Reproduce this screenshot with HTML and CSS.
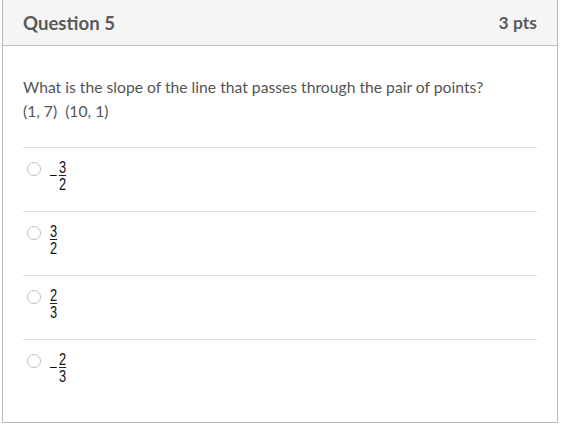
FILE: index.html
```html
<!DOCTYPE html>
<html>
<head>
<meta charset="utf-8">
<link rel="stylesheet" href="styles.css">
</head>
<body>
<div class="quiz">
  <div class="header">
    <span class="title">Question 5</span>
    <span class="pts">3 pts</span>
  </div>
  <div class="body">
    <div class="question">
      <div>What is the slope of the line that passes through the pair of points?</div>
      <div>(1, 7)&nbsp;&nbsp;(10, 1)</div>
    </div>
    <div class="answers">
      <div class="answer"><span class="radio"></span><span class="math"><span class="minus">−</span><span class="frac"><span class="num">3</span><span class="den">2</span></span></span></div>
      <div class="answer"><span class="radio"></span><span class="math"><span class="frac"><span class="num">3</span><span class="den">2</span></span></span></div>
      <div class="answer"><span class="radio"></span><span class="math"><span class="frac"><span class="num">2</span><span class="den">3</span></span></span></div>
      <div class="answer"><span class="radio"></span><span class="math"><span class="minus">−</span><span class="frac"><span class="num">2</span><span class="den">3</span></span></span></div>
    </div>
  </div>
</div>
</body>
</html>
```
FILE: styles.css
```css
html, body {
  margin: 0;
  padding: 0;
  background: #fff;
}
body {
  font-family: Lato, "Noto Sans", sans-serif;
  color: #555;
}
.quiz {
  margin: -1px 0 0 2px;
  width: 554px;
  height: 422px;
  border: 1px solid #b9b9b9;
  display: flex;
  flex-direction: column;
}
.header {
  height: 45px;
  background: #f5f5f5;
  border-bottom: 1px solid #c0c0c0;
  display: flex;
  justify-content: space-between;
  align-items: center;
  padding: 0 20px;
  font-weight: bold;
  font-size: 18.6px;
  color: #5a5a5a;
}
.pts {
  font-size: 17.5px;
}
.body {
  padding: 29px 20px 0 20px;
}
.question {
  font-size: 15.7px;
  line-height: 24px;
  color: #555;
  padding-bottom: 24px;
}
.answer {
  border-top: 1px solid #e0e0e0;
  display: flex;
  align-items: flex-start;
  padding-top: 12px;
  box-sizing: border-box;
  height: 64px;
}
.radio {
  width: 12px;
  height: 12px;
  border: 1px solid #c2c2c2;
  border-radius: 50%;
  margin: 2px 0 0 4px;
  background: #fff;
  flex: none;
}
.math {
  display: flex;
  align-items: center;
  margin-left: 8px;
  font-family: "Liberation Sans", Arial, sans-serif;
  color: #111;
}
.minus {
  font-size: 14px;
  line-height: 14px;
  margin-right: 1px;
  margin-top: -2px;
}
.frac {
  display: flex;
  flex-direction: column;
  align-items: center;
  font-size: 16px;
  line-height: 15px;
}
.num, .den {
  display: block;
  width: 9px;
  text-align: center;
  transform: scaleX(0.8);
}
.num {
  border-bottom: 1px solid #222;
}
.den {
  padding-top: 1px;
}
```
